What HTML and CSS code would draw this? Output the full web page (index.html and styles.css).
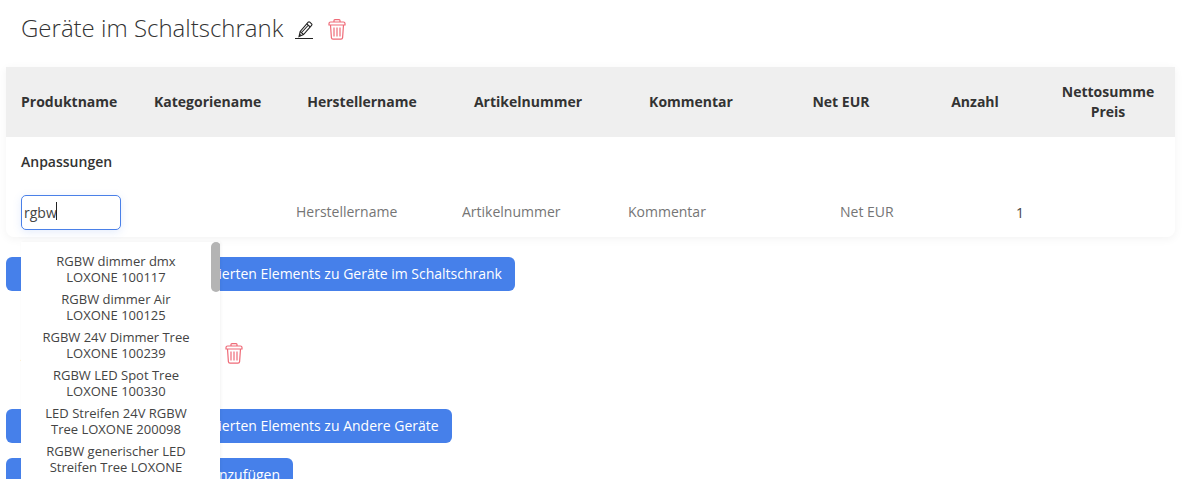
FILE: index.html
```html
<!DOCTYPE html>
<html lang="de">
<head>
<meta charset="utf-8">
<title>Geräte im Schaltschrank</title>
<link rel="stylesheet" href="styles.css">
</head>
<body>
<main class="page">
  <section class="group">
    <div class="heading">
      <h2>Geräte im Schaltschrank</h2>
      <a class="edit" href="#" aria-label="Bearbeiten">
        <svg width="18" height="17" viewBox="0 0 18 17" fill="none" stroke="#222" stroke-width="1.1"><path d="M4 15.600 5.200 10.500 13.200 1.200Q14 .5 14.800 1.200L16.600 2.900Q17.300 3.600 16.600 4.400L8.500 13.500Z"/><path d="M5.200 10.500 8.500 13.500M11.800 2.800 15.200 6M7 11 13.500 4M4.600 13.200 6.200 14.600"/></svg>
      </a>
      <button class="trash" aria-label="Löschen">
        <svg width="18" height="21" viewBox="0 0 18 21" fill="none" stroke="#ef6b78" stroke-width="1.2"><path d="M1 4.500C1 3.400 1.600 3 2.600 3h12.800c1 0 1.600.4 1.600 1.500V6H1V4.500Z"/><path d="M6 3V1.600C6 1 6.300.7 6.900.7h4.200c.6 0 .9.300.9.900V3"/><path d="M2.500 6l.9 12.600c.1 1 .7 1.600 1.600 1.600h8c.9 0 1.500-.6 1.600-1.600L15.500 6"/><path d="M6 8.500v9M9 8.500v9M12 8.500v9"/></svg>
      </button>
    </div>

    <div class="card">
      <table>
        <colgroup>
          <col class="c1"><col class="c2"><col class="c3"><col class="c4"><col class="c5"><col class="c6"><col class="c7"><col class="c8">
        </colgroup>
        <thead>
          <tr>
            <th class="first">Produktname</th>
            <th>Kategoriename</th>
            <th>Herstellername</th>
            <th>Artikelnummer</th>
            <th>Kommentar</th>
            <th>Net EUR</th>
            <th>Anzahl</th>
            <th class="last">Nettosumme Preis</th>
          </tr>
        </thead>
        <tbody>
          <tr class="sub">
            <td colspan="8">Anpassungen</td>
          </tr>
          <tr class="entry">
            <td class="search-cell">
              <div class="search">
                <input class="search-input" value="rgbw" aria-label="Produktname">
                <span class="caret"></span>
                <div class="dropdown">
                  <ul>
                    <li>RGBW dimmer dmx LOXONE 100117</li>
                    <li>RGBW dimmer Air LOXONE 100125</li>
                    <li>RGBW 24V Dimmer Tree LOXONE 100239</li>
                    <li>RGBW LED Spot Tree LOXONE 100330</li>
                    <li>LED Streifen 24V RGBW Tree LOXONE 200098</li>
                    <li>RGBW generischer LED Streifen Tree LOXONE</li>
                  </ul>
                  <span class="thumb"></span>
                </div>
              </div>
            </td>
            <td></td>
            <td class="p-hersteller"><input class="plain" placeholder="Herstellername"></td>
            <td class="p-artikel"><input class="plain" placeholder="Artikelnummer"></td>
            <td class="p-kommentar"><input class="plain" placeholder="Kommentar"></td>
            <td class="p-net"><input class="plain short" placeholder="Net EUR"></td>
            <td class="p-anzahl"><input class="plain tiny" value="1"></td>
            <td></td>
          </tr>
        </tbody>
      </table>
    </div>
    <button class="primary">Füge die Produkte der kombinierten Elements zu Geräte im Schaltschrank</button>
  </section>

  <section class="group second">
    <div class="heading">
      <h2>Andere Geräte</h2>
      <a class="edit" href="#" aria-label="Bearbeiten">
        <svg width="18" height="17" viewBox="0 0 18 17" fill="none" stroke="#222" stroke-width="1.1"><path d="M4 15.600 5.200 10.500 13.200 1.200Q14 .5 14.800 1.200L16.600 2.900Q17.300 3.600 16.600 4.400L8.500 13.500Z"/></svg>
      </a>
      <button class="trash" aria-label="Löschen">
        <svg width="18" height="21" viewBox="0 0 18 21" fill="none" stroke="#ef6b78" stroke-width="1.2"><path d="M1 4.500C1 3.400 1.600 3 2.600 3h12.800c1 0 1.600.4 1.600 1.500V6H1V4.500Z"/><path d="M6 3V1.600C6 1 6.300.7 6.900.7h4.200c.6 0 .9.300.9.900V3"/><path d="M2.500 6l.9 12.600c.1 1 .7 1.600 1.600 1.600h8c.9 0 1.500-.6 1.600-1.600L15.500 6"/><path d="M6 8.500v9M9 8.500v9M12 8.500v9"/></svg>
      </button>
    </div>
    <div class="actions">
      <button class="primary">Füge die Produkte der kombinierten Elements zu Andere Geräte</button>
      <button class="primary">Weitere neue Gerätegruppe hinzufügen</button>
    </div>
  </section>
</main>
</body>
</html>
```

FILE: styles.css
```css
* {
  box-sizing: border-box;
}

html,
body {
  height: 479px;
  margin: 0;
  overflow: hidden;
  background: #fff;
}

body {
  font-family: "Open Sans", sans-serif;
  color: #333;
}

.page {
  padding: 0 15px 0 6px;
}

.heading {
  display: flex;
  align-items: center;
  height: 67px;
  padding: 0 0 10px 15px;
}

h2 {
  margin: -2px 0 0;
  font-size: 24px;
  font-weight: 300;
  color: #333;
}

.edit {
  display: block;
  margin-left: 12px;
  margin-top: 3px;
  border-bottom: 1px solid #222;
  line-height: 0;
}

.trash {
  margin: 2px 0 0 15px;
  padding: 0;
  border: 0;
  background: none;
  line-height: 0;
}

.card {
  border-radius: 0 0 8px 8px;
  box-shadow: 0 2px 10px rgba(0, 0, 0, 0.05);
}

table {
  width: 1169px;
  border-collapse: collapse;
  table-layout: fixed;
}

.c1 { width: 133px; }
.c2 { width: 136px; }
.c3 { width: 174px; }
.c4 { width: 158px; }
.c5 { width: 168px; }
.c6 { width: 132px; }
.c7 { width: 136px; }
.c8 { width: 132px; }

thead tr {
  height: 70px;
  background: #efefef;
}

th {
  padding: 0 15px;
  font-size: 14px;
  font-weight: 700;
  line-height: 20px;
  text-align: center;
  color: #333;
}

th.first {
  text-align: left;
}

th.last {
  padding-right: 17px;
}

.sub td {
  height: 50px;
  padding: 0 15px 2px;
  font-size: 14px;
  font-weight: 600;
  color: #333;
}

.entry td {
  height: 50px;
  padding: 0;
}

.search-cell {
  padding-left: 15px !important;
}

.search {
  position: relative;
  width: 100px;
  height: 35px;
}

.search-input {
  display: block;
  width: 100px;
  height: 35px;
  padding: 0 2px;
  border: 1px solid #4a80e8;
  border-radius: 5px;
  outline: 0;
  box-shadow: 0 2px 8px rgba(74, 128, 232, 0.15);
  font: 400 14px "Open Sans", sans-serif;
  color: #444;
}

.caret {
  position: absolute;
  left: 35px;
  top: 7px;
  width: 1px;
  height: 18px;
  background: #222;
}

.dropdown {
  position: absolute;
  left: 0;
  top: 47px;
  z-index: 5;
  width: 199px;
  height: 300px;
  overflow: hidden;
  background: #fff;
  box-shadow: 1px 0 3px rgba(0, 0, 0, 0.05);
}

.dropdown ul {
  width: 190px;
  margin: 0;
  padding: 8px 15px 0;
  list-style: none;
}

.dropdown li {
  padding: 3px 0;
  font-size: 13px;
  line-height: 16px;
  text-align: center;
  color: #444;
}

.thumb {
  position: absolute;
  right: -1px;
  top: 0;
  width: 10px;
  height: 50px;
  border-radius: 5px;
  background: #b4b4b4;
}

.plain {
  display: block;
  width: 130px;
  margin-bottom: 2px;
  padding: 0;
  border: 0;
  outline: 0;
  background: transparent;
  font: 400 14px "Open Sans", sans-serif;
  color: #444;
}

.plain::placeholder {
  color: #757575;
  opacity: 1;
}

.short { width: 60px; }
.tiny { width: 20px; margin-bottom: 0; }

.p-hersteller { padding-left: 21px !important; }
.p-artikel { padding-left: 13px !important; }
.p-kommentar { padding-left: 21px !important; }
.p-net { padding-left: 65px !important; }
.p-anzahl { padding-left: 109px !important; }

.primary {
  display: block;
  height: 34px;
  padding: 0 13px 2px 15px;
  border: 0;
  border-radius: 6px;
  background: #4680ea;
  font: 500 14px "Open Sans", sans-serif;
  color: #fff;
  white-space: nowrap;
}

.group > .primary {
  margin-top: 20px;
}

.second {
  padding-top: 28px;
}

.second .heading {
  height: 90px;
  padding-bottom: 24px;
}

.actions {
  display: flex;
  flex-direction: column;
  gap: 15px;
  align-items: flex-start;
}
```
